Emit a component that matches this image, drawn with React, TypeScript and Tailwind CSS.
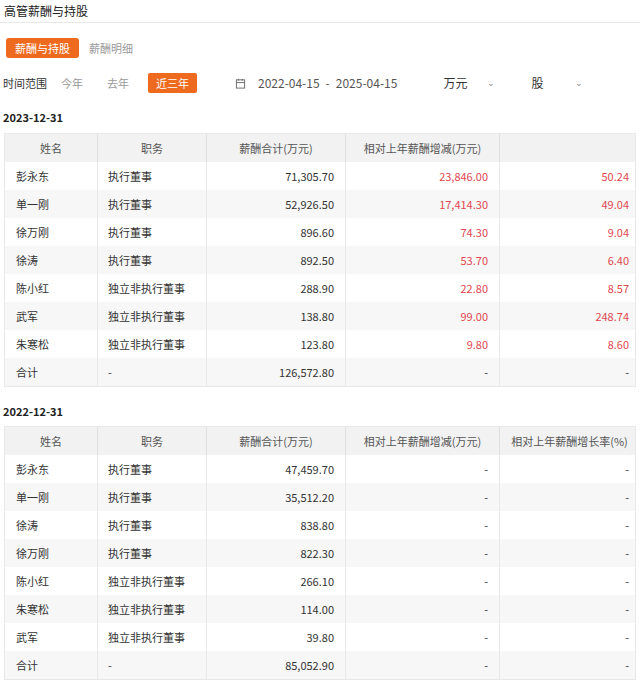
const F = { fontFamily: '"Noto Sans CJK SC", "Noto Sans", sans-serif' };
type Row = [string, string, string, string, string];
const t1: Row[] = [
  ['彭永东','执行董事','71,305.70','23,846.00','50.24'],
  ['单一刚','执行董事','52,926.50','17,414.30','49.04'],
  ['徐万刚','执行董事','896.60','74.30','9.04'],
  ['徐涛','执行董事','892.50','53.70','6.40'],
  ['陈小红','独立非执行董事','288.90','22.80','8.57'],
  ['武军','独立非执行董事','138.80','99.00','248.74'],
  ['朱寒松','独立非执行董事','123.80','9.80','8.60'],
  ['合计','-','126,572.80','-','-'],
];
const t2: Row[] = [
  ['彭永东','执行董事','47,459.70','-','-'],
  ['单一刚','执行董事','35,512.20','-','-'],
  ['徐涛','执行董事','838.80','-','-'],
  ['徐万刚','执行董事','822.30','-','-'],
  ['陈小红','独立非执行董事','266.10','-','-'],
  ['朱寒松','独立非执行董事','114.00','-','-'],
  ['武军','独立非执行董事','39.80','-','-'],
  ['合计','-','85,052.90','-','-'],
];
const cols = 'grid grid-cols-[93px_109px_139px_154px_139px]';
function Table({ rows, last }: { rows: Row[]; last: string }) {
  return (
    <div className="mx-[4px] border border-[#e8e8e8] text-[11px] text-[#333]">
      <div className={cols + ' bg-[#f2f2f2] h-[28px] items-center text-center text-[#555]'}>
        <div className="border-r border-[#e0e0e0] h-full flex items-center justify-center">姓名</div>
        <div className="border-r border-[#e0e0e0] h-full flex items-center justify-center">职务</div>
        <div className="border-r border-[#e0e0e0] h-full flex items-center justify-center">薪酬合计(万元)</div>
        <div className="border-r border-[#e0e0e0] h-full flex items-center justify-center">相对上年薪酬增减(万元)</div>
        <div className="h-full flex items-center justify-center">{last}</div>
      </div>
      {rows.map((r, i) => {
        const red = r[3] !== '-';
        return (
          <div key={i} className={cols + ' h-[28px] items-center ' + (i % 2 ? 'bg-[#f7f7f7]' : 'bg-white')}>
            <div className="border-r border-[#e8e8e8] h-full flex items-center pl-[11px]">{r[0]}</div>
            <div className="border-r border-[#e8e8e8] h-full flex items-center pl-[10px]">{r[1]}</div>
            <div className="border-r border-[#e8e8e8] h-full flex items-center justify-end pr-[11px]">{r[2]}</div>
            <div className={'border-r border-[#e8e8e8] h-full flex items-center justify-end pr-[11px] ' + (red ? 'text-[#e0474f]' : '')}>{r[3]}</div>
            <div className={'h-full flex items-center justify-end pr-[10px] ' + (red ? 'text-[#e0474f]' : '')}>{r[4]}</div>
          </div>
        );
      })}
    </div>
  );
}
export default function App() {
  return (
    <div style={F} className="w-[640px] h-[684px] bg-white overflow-hidden">
      <div className="h-[23px] flex items-center px-[4px] text-[12px] text-[#222] border-b border-[#e8e8e8]">高管薪酬与持股</div>
      <div className="flex items-center gap-[10px] mt-[15px] px-[6px] text-[11px]">
        <div className="bg-[#ee6a1e] text-white rounded-[3px] px-[9px] h-[20px] flex items-center">薪酬与持股</div>
        <div className="text-[#999]">薪酬明细</div>
      </div>
      <div className="flex items-center mt-[14px] px-[3px] text-[11px] h-[22px]">
        <span className="text-[#333]">时间范围</span>
        <span className="text-[#999] ml-[14px]">今年</span>
        <span className="text-[#999] ml-[24px]">去年</span>
        <span className="bg-[#ee6a1e] text-white rounded-[2px] px-[8px] h-[20px] flex items-center ml-[19px]">近三年</span>
        <span className="ml-[38px] flex items-center text-[#555] text-[12px]">
          <svg width="11" height="11" viewBox="0 0 12 12" fill="none" stroke="#666" strokeWidth="1"><rect x="1.5" y="2" width="9" height="9" /><path d="M1.5 5h9M4 1v2M8 1v2" /></svg>
          <span className="ml-[12px]">2022-04-15</span>
          <span className="mx-[6px]">-</span>
          <span>2025-04-15</span>
        </span>
        <span className="ml-[46px] flex items-center text-[12px] text-[#333]">万元<span className="ml-[20px] text-[9px] text-[#888]">⌄</span></span>
        <span className="ml-[36px] flex items-center text-[12px] text-[#333]">股<span className="ml-[32px] text-[9px] text-[#888]">⌄</span></span>
      </div>
      <div className="mt-[15px] px-[3px] text-[11px] font-bold text-[#222] h-[16px] flex items-center">2023-12-31</div>
      <div className="mt-[8px]"><Table rows={t1} last="" /></div>
      <div className="mt-[16px] px-[3px] text-[11px] font-bold text-[#222] h-[16px] flex items-center">2022-12-31</div>
      <div className="mt-[7px]"><Table rows={t2} last="相对上年薪酬增长率(%)" /></div>
    </div>
  );
}
